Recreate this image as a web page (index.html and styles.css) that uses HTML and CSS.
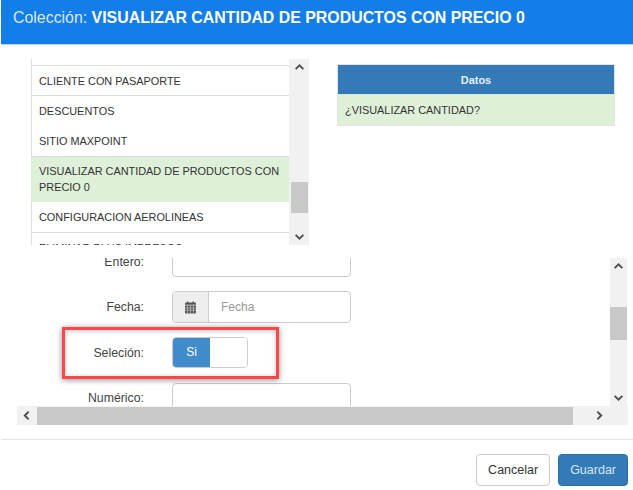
FILE: index.html
```html
<!DOCTYPE html>
<html lang="es">
<head>
    <meta charset="UTF-8">
    <title>Colección</title>
    <link rel="stylesheet" href="styles.css">
</head>
<body>
    <header class="modal-header">
        <span class="modal-title">Colección: <b>VISUALIZAR CANTIDAD DE PRODUCTOS CON PRECIO 0</b></span>
    </header>

    <section class="top-row">
        <div class="list-box">
            <ul class="list">
                <li class="list-item"></li>
                <li class="list-item">CLIENTE CON PASAPORTE</li>
                <li class="list-item no-line">DESCUENTOS</li>
                <li class="list-item sitio">SITIO MAXPOINT</li>
                <li class="list-item active">VISUALIZAR CANTIDAD DE PRODUCTOS CON PRECIO 0</li>
                <li class="list-item sitio">CONFIGURACION AEROLINEAS</li>
                <li class="list-item">ELIMINAR PLUS IMPRESOS</li>
            </ul>
            <div class="vbar list-bar">
                <svg class="arrow" viewBox="0 0 10 10"><path d="M1.500 6.500 5 3l3.500 3.500"/></svg>
                <div class="track"><div class="thumb list-thumb"></div></div>
                <svg class="arrow" viewBox="0 0 10 10"><path d="M1.500 3.500 5 7l3.500-3.500"/></svg>
            </div>
        </div>
        <table class="data-table">
            <thead><tr><th>Datos</th></tr></thead>
            <tbody><tr><td>¿VISUALIZAR CANTIDAD?</td></tr></tbody>
        </table>
    </section>

    <section class="form-box">
        <div class="form-main">
            <form class="form-view">
                <div class="form-row entero">
                    <label class="form-label">Entero:</label>
                    <div class="input"></div>
                </div>
                <div class="form-row fecha">
                    <label class="form-label">Fecha:</label>
                    <div class="input-group">
                        <span class="addon">
                            <svg class="cal" viewBox="0 0 13 13">
                                <path d="M1 4.600h11v7a1 1 0 0 1-1 1H2a1 1 0 0 1-1-1zM2 1.600h9a1 1 0 0 1 1 1v1.200H1V2.600a1 1 0 0 1 1-1zM3 .4h1.500v2H3zM8.500.4H10v2H8.500z"/>
                                <path class="cal-grid" d="M1 7h11M1 9.200h11M3.600 4.600v8M6.500 4.600v8M9.400 4.600v8"/>
                            </svg>
                        </span>
                        <span class="placeholder">Fecha</span>
                    </div>
                </div>
                <div class="form-row seleccion">
                    <label class="form-label">Seleción:</label>
                    <div class="switch"><span class="switch-on">Si</span><span class="switch-off"></span></div>
                </div>
                <div class="form-row numerico">
                    <label class="form-label">Numérico:</label>
                    <div class="input"></div>
                </div>
            </form>
            <div class="vbar form-bar">
                <svg class="arrow" viewBox="0 0 10 10"><path d="M1.500 6.500 5 3l3.500 3.500"/></svg>
                <div class="track"><div class="thumb form-thumb"></div></div>
                <svg class="arrow" viewBox="0 0 10 10"><path d="M1.500 3.500 5 7l3.500-3.500"/></svg>
            </div>
        </div>
        <div class="hbar">
            <svg class="arrow" viewBox="0 0 10 10"><path d="M6.500 1.500 3 5l3.500 3.500"/></svg>
            <div class="hthumb"></div>
            <svg class="arrow" viewBox="0 0 10 10"><path d="M3.500 1.500 7 5 3.500 8.500"/></svg>
        </div>
        <!-- red box drawn over the screenshot -->
        <div class="highlight"></div>
    </section>

    <footer class="modal-footer">
        <button class="btn btn-default" type="button">Cancelar</button>
        <button class="btn btn-primary" type="button">Guardar</button>
    </footer>
</body>
</html>
```

FILE: styles.css
```css
* {
    box-sizing: border-box;
}

html, body {
    height: 100%;
}

body {
    margin: 0;
    background-color: #fff;
    color: #333;
    font-family: "Liberation Sans", Arial, sans-serif;
    overflow: hidden;
}

.modal-header {
    height: 45px;
    margin-left: 1px;
    padding: 8px 0 0 12px;
    background-color: #137de8;
    border-bottom: 1px solid #b9d6f3;
    color: #d9e9fb;
    font-size: 15.900px;
    line-height: 20px;
}

.modal-title b {
    color: #fff;
}

/* list and data table */
.top-row {
    display: flex;
    align-items: flex-start;
    height: 186px;
    margin-top: 14px;
    padding-left: 31px;
}

.list-box {
    display: flex;
    width: 278px;
    height: 186px;
    overflow: hidden;
}

.list {
    flex: 1;
    margin: 0;
    padding: 0;
    list-style: none;
    overflow: hidden;
}

.list-item {
    min-height: 30px;
    padding: 7px 7px 5px;
    background-color: #fff;
    border-bottom: 1px solid #ddd;
    border-left: 1px solid #ddd;
    font-size: 10.900px;
    line-height: 16px;
}

.list-item:first-child {
    min-height: 7px;
    height: 7px;
    padding: 0;
}

.list-item.no-line {
    border-bottom: 0;
}

.list-item.sitio {
    min-height: 31px;
}

.list-item.active {
    min-height: 45px;
    padding-top: 6px;
    background-color: #dff0d8;
    border-bottom-color: #dff0d8;
    border-left-color: #dff0d8;
}

.vbar {
    display: flex;
    flex-direction: column;
    align-items: center;
    background-color: #f1f1f1;
}

.list-bar {
    width: 20px;
}

.arrow {
    flex: none;
    width: 11px;
    height: 17px;
    fill: none;
    stroke: #505050;
    stroke-width: 1.800;
}

.track {
    flex: 1;
    width: 100%;
    padding: 0 2px;
}

.thumb {
    background-color: #c8c8c8;
}

.list-thumb {
    width: 17px;
    height: 31px;
    margin-top: 106px;
}

.data-table {
    width: 278px;
    margin: 5px 0 0 28px;
    border-collapse: collapse;
    border: 1px solid #e4e4e4;
    font-size: 10.900px;
}

.data-table th {
    height: 30px;
    padding: 0;
    background-color: #337ab7;
    color: #e6eff7;
    font-weight: bold;
}

.data-table td {
    height: 31px;
    padding: 0 7px;
    background-color: #dff0d8;
    border-top: 1px solid #d9e4d4;
}

/* form with scrollbars */
.form-box {
    position: relative;
    width: 628px;
    height: 167px;
    margin-top: 13px;
    padding-left: 17px;
}

.form-main {
    display: flex;
    height: 148px;
    margin-right: 1px;
}

.form-view {
    flex: 1;
    height: 148px;
    overflow: hidden;
}

.form-row {
    display: flex;
    align-items: center;
}

.form-label {
    width: 127px;
    margin-right: 28px;
    text-align: right;
    font-size: 12.300px;
    color: #444;
}

.input {
    width: 179px;
    height: 32px;
    background-color: #fff;
    border: 1px solid #ccc;
    border-radius: 4px;
}

.entero {
    margin-top: -13px;
}

.entero .form-label {
    padding-top: 2px;
}

.fecha {
    margin-top: 14px;
}

.input-group {
    display: flex;
    width: 179px;
    height: 32px;
    border: 1px solid #ccc;
    border-radius: 4px;
    overflow: hidden;
}

.addon {
    display: flex;
    align-items: center;
    justify-content: center;
    width: 36px;
    background-color: #eee;
    border-right: 1px solid #ccc;
}

.cal {
    width: 13px;
    height: 13px;
    fill: #555;
}

.cal-grid {
    fill: none;
    stroke: #eee;
    stroke-width: .5;
}

.placeholder {
    padding: 0 0 0 12px;
    font-size: 12px;
    line-height: 30px;
    color: #999;
}

.seleccion {
    margin-top: 14px;
}

.switch {
    display: flex;
    width: 76px;
    height: 31px;
    border: 1px solid #ccc;
    border-radius: 4px;
    overflow: hidden;
}

.switch-on {
    width: 37px;
    background-color: #428bca;
    color: #fff;
    font-size: 12px;
    line-height: 29px;
    text-align: center;
}

.switch-off {
    flex: 1;
    background-color: #fff;
}

.numerico {
    margin-top: 15px;
    align-items: flex-start;
}

.numerico .form-label {
    padding-top: 8px;
}

.form-bar {
    width: 17px;
}

.form-thumb {
    width: 17px;
    height: 33px;
    margin: 32px 0 0 -2px;
}

.hbar {
    display: flex;
    align-items: center;
    width: 611px;
    height: 19px;
    background-color: #f1f1f1;
}

.hbar .arrow {
    width: 20px;
    height: 11px;
}

.hthumb {
    width: 536px;
    height: 18px;
    background-color: #c8c8c8;
}

.hbar .arrow:last-child {
    margin-left: 16px;
}

.highlight {
    position: absolute;
    left: 62px;
    top: 69px;
    width: 217px;
    height: 52px;
    border: 3px solid #fb4747;
    box-shadow: 0 1px 6px rgba(0, 0, 0, .45), inset 0 1px 5px rgba(0, 0, 0, .25);
}

/* footer buttons */
.modal-footer {
    display: flex;
    justify-content: flex-end;
    gap: 8px;
    margin: 14px 0 0 1px;
    padding: 14px 5px 0 0;
    border-top: 1px solid #e5e5e5;
}

.btn {
    height: 32px;
    padding: 0 11px;
    border: 1px solid #ccc;
    border-radius: 4px;
    background-color: #fff;
    color: #333;
    font-family: inherit;
    font-size: 12.500px;
}

.btn-primary {
    background-color: #337ab7;
    border-color: #2e6da4;
    color: #d8e6f2;
}
```
